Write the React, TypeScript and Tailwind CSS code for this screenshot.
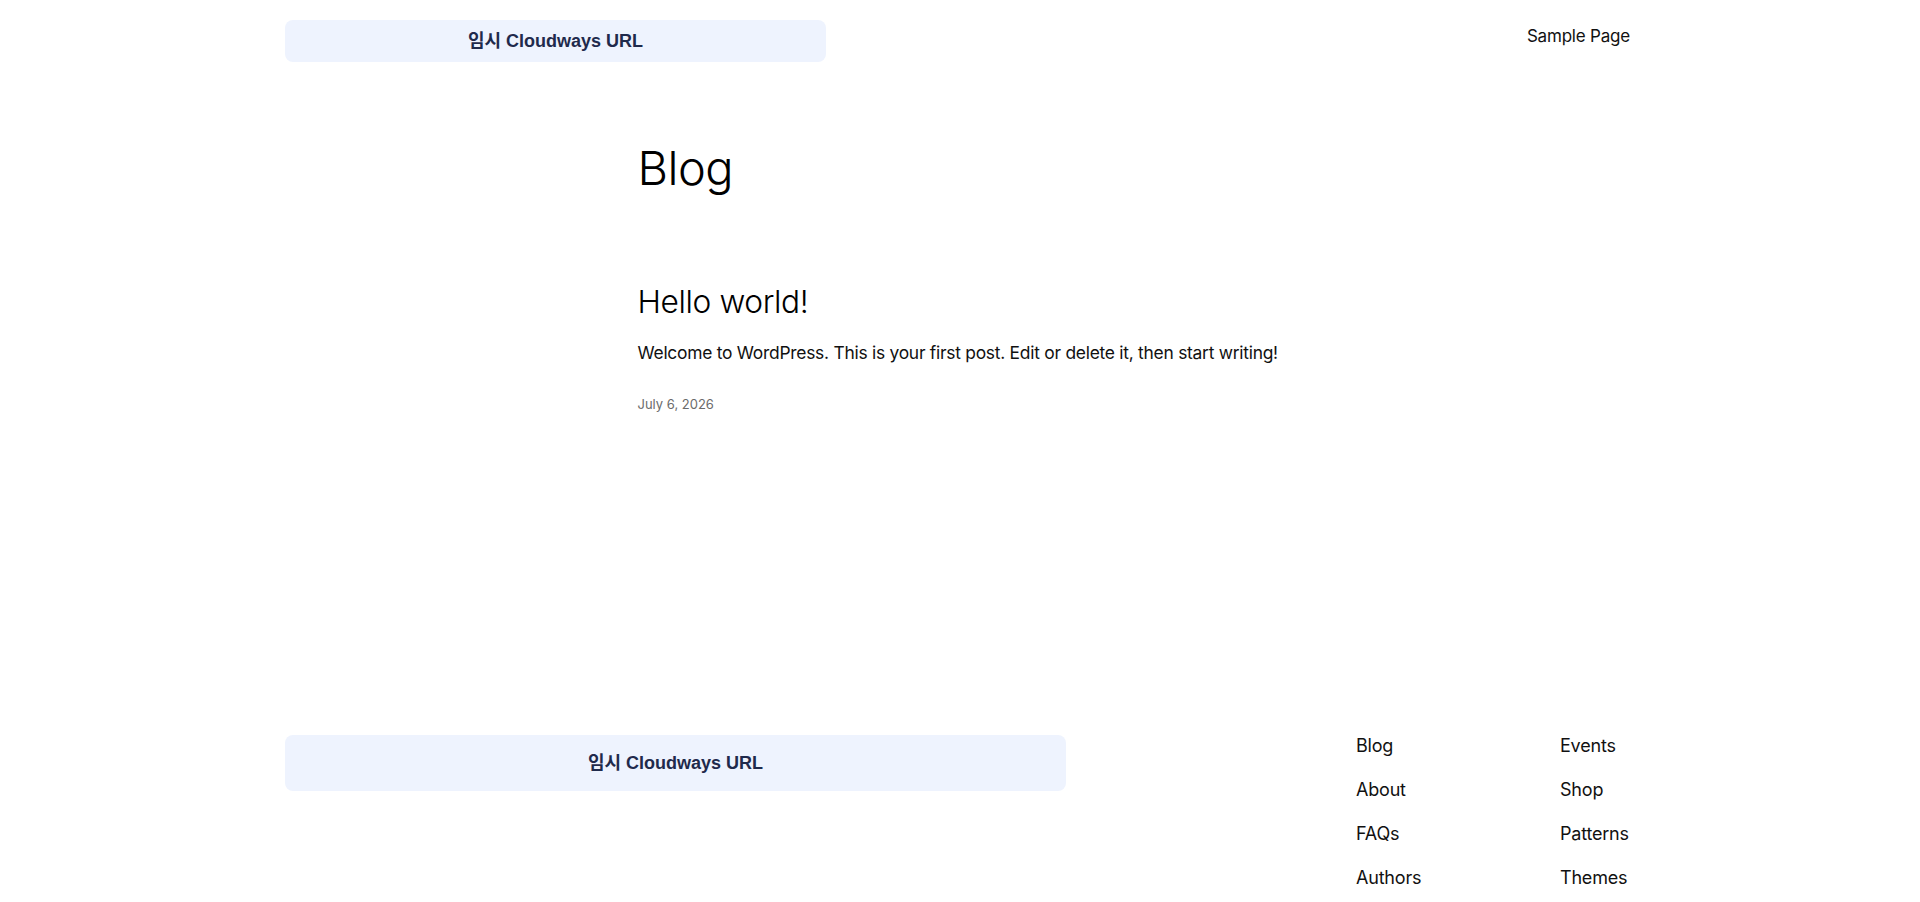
import React from "react";

const BODY_FONT = "font-['Inter','Noto_Sans',sans-serif]";
const BADGE_FONT = "font-['Liberation_Sans','Noto_Sans_CJK_KR',sans-serif]";

const FOOTER_LINKS = [
  ["Blog", "About", "FAQs", "Authors"],
  ["Events", "Shop", "Patterns", "Themes"],
];

function UrlBadge({ className }: { className: string }) {
  return (
    <div
      className={`flex items-center justify-center rounded-lg bg-[#eef3fe] text-[18px] font-bold text-[#1f2a4c] ${BADGE_FONT} ${className}`}
    >
      임시 Cloudways URL
    </div>
  );
}

export default function App() {
  return (
    <div className={`min-h-screen bg-white text-[#000] ${BODY_FONT}`}>
      <header className="mx-auto flex w-[1350px] items-start justify-between pt-5">
        <UrlBadge className="h-[42px] w-[541px]" />
        <nav className="pt-[3px] pr-[5px]">
          <a className="text-[17px] leading-[26px] tracking-[-0.2px] text-[#111]">Sample Page</a>
        </nav>
      </header>

      <main className="mx-auto w-[645px]">
        <h1 className="mt-[76px] text-[47px] leading-[60px] tracking-[-0.5px] font-light">Blog</h1>

        <article className="mt-[84px]">
          <h2 className="text-[31.7px] leading-[40px] tracking-[-0.4px] font-light">Hello world!</h2>
          <p className="mt-[18px] whitespace-nowrap text-[17.4px] leading-[26px] tracking-[-0.25px] text-[#111]">
            Welcome to WordPress. This is your first post. Edit or delete it, then start writing!
          </p>
          <p className="mt-[28px] text-[13px] leading-[20px] text-[#6b6b6b]">July 6, 2026</p>
        </article>
      </main>

      <footer className="mx-auto mt-[321px] flex w-[1350px] items-start">
        <UrlBadge className="h-[56px] w-[781px]" />
        <div className="ml-[290px] flex gap-0">
          {FOOTER_LINKS.map((col, i) => (
            <ul key={i} className={`-mt-[2px] flex flex-col gap-[18px] ${i === 0 ? "w-[204px]" : ""}`}>
              {col.map((label) => (
                <li key={label} className="text-[18px] leading-[26px] tracking-[-0.2px] text-[#111]">
                  {label}
                </li>
              ))}
            </ul>
          ))}
        </div>
      </footer>
      <div className="h-16" />
    </div>
  );
}
